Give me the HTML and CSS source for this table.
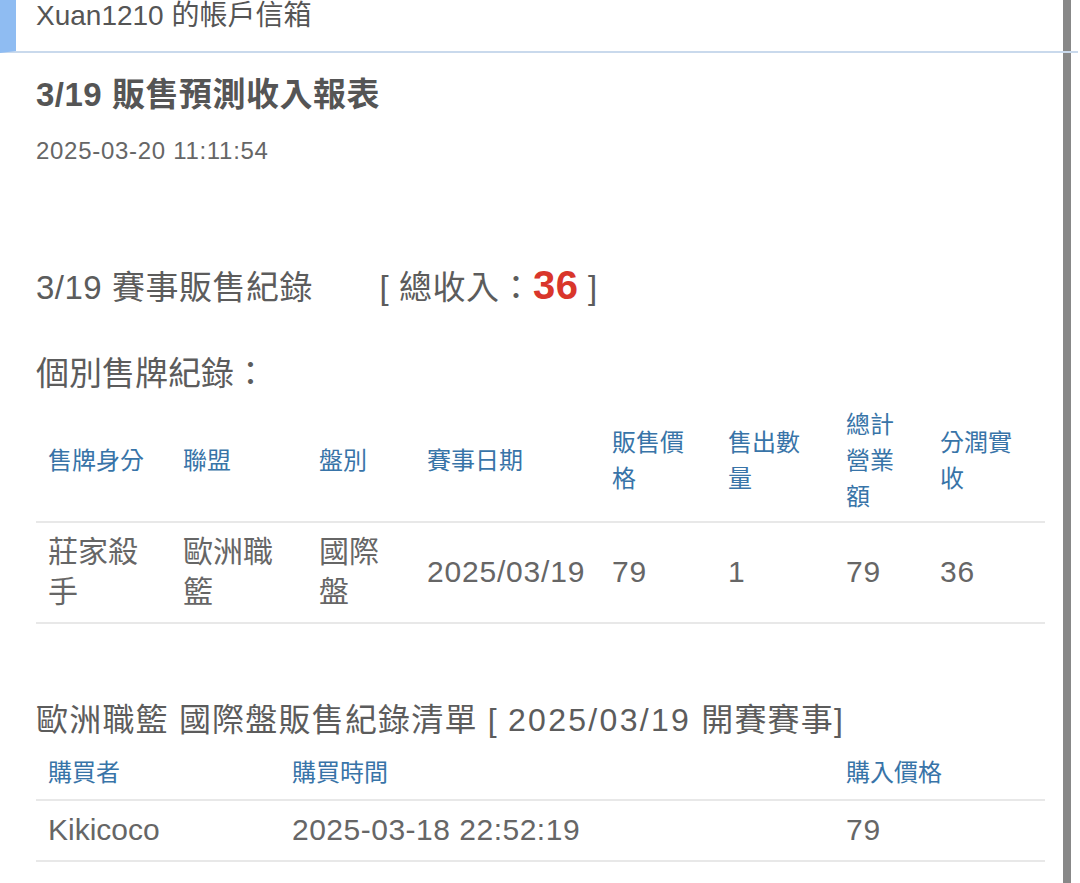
FILE: index.html
```html
<!DOCTYPE html>
<html lang="zh-Hant">
<head>
    <meta charset="UTF-8">
    <meta name="viewport" content="width=device-width, initial-scale=1.0">
    <title>Xuan1210 的帳戶信箱</title>
    <link rel="stylesheet" href="styles.css">
</head>
<body>

<div class="window">
    <!-- Mailbox bar -->
    <div class="mailbox-bar">
        <span class="mailbox-title">Xuan1210 的帳戶信箱</span>
    </div>

    <!-- Message -->
    <div class="message">
        <h1 class="msg-title">3/19 販售預測收入報表</h1>
        <p class="msg-time">2025-03-20 11:11:54</p>

        <h2 class="summary">
            <span class="summary-label">3/19 賽事販售紀錄</span>
            <span class="total">[ 總收入：<b class="total-num">36</b> ]</span>
        </h2>

        <h3 class="sub-title">個別售牌紀錄：</h3>
        <table class="record-table sales-table">
            <colgroup>
                <col style="width: 135px">
                <col style="width: 136px">
                <col style="width: 108px">
                <col style="width: 185px">
                <col style="width: 116px">
                <col style="width: 118px">
                <col style="width: 94px">
                <col style="width: 117px">
            </colgroup>
            <thead>
                <tr>
                    <th>售牌身分</th>
                    <th>聯盟</th>
                    <th>盤別</th>
                    <th>賽事日期</th>
                    <th>販售價格</th>
                    <th>售出數量</th>
                    <th>總計營業額</th>
                    <th>分潤實收</th>
                </tr>
            </thead>
            <tbody>
                <tr>
                    <td>莊家殺手</td>
                    <td>歐洲職籃</td>
                    <td>國際盤</td>
                    <td class="num">2025/03/19</td>
                    <td class="num">79</td>
                    <td class="num">1</td>
                    <td class="num">79</td>
                    <td class="num">36</td>
                </tr>
            </tbody>
        </table>

        <h3 class="list-title">歐洲職籃 國際盤販售紀錄清單 [ <span class="list-date">2025/03/19</span> 開賽賽事]</h3>
        <table class="record-table buyer-table">
            <colgroup>
                <col style="width: 244px">
                <col style="width: 554px">
                <col style="width: 211px">
            </colgroup>
            <thead>
                <tr>
                    <th>購買者</th>
                    <th>購買時間</th>
                    <th>購入價格</th>
                </tr>
            </thead>
            <tbody>
                <tr>
                    <td>Kikicoco</td>
                    <td class="time">2025-03-18 22:52:19</td>
                    <td class="num">79</td>
                </tr>
            </tbody>
        </table>
    </div>
</div>

</body>
</html>
```

FILE: styles.css
```css
/* Global Styles */
body {
    font-family: "Liberation Sans", "Noto Sans CJK TC", sans-serif;
    background-color: #ffffff;
    margin: 0;
    padding: 0;
    color: #666;
}

.window {
    width: 1063px;
    height: 883px;
    border-right: 8px solid #888;
    overflow: visible;
}

/* Mailbox bar */
.mailbox-bar {
    height: 51px;
    margin-right: -15px;
    padding-left: 20px;
    border-left: 16px solid #8fbcf2;
    border-bottom: 2px solid #c9d9ec;
}

.mailbox-title {
    display: block;
    font-size: 28px;
    line-height: 32px;
    color: #555;
}

/* Message */
.message {
    padding: 0 18px 0 36px;
}

.msg-title {
    margin: 22px 0 0;
    font-size: 33px;
    line-height: 40px;
    letter-spacing: 0.5px;
    font-weight: 700;
    color: #555;
}

.msg-time {
    margin: 20px 0 0;
    font-size: 24px;
    line-height: 32px;
    letter-spacing: 0.7px;
    color: #666;
}

.summary {
    margin: 96px 0 0;
    font-size: 33px;
    line-height: 44px;
    letter-spacing: 0.5px;
    font-weight: 400;
    color: #5c5c5c;
}

.total {
    margin-left: 57px;
}

.total-num {
    font-size: 40px;
    font-weight: 700;
    color: #d9362b;
}

.sub-title {
    margin: 42px 0 0;
    font-size: 33px;
    line-height: 44px;
    font-weight: 400;
    color: #5c5c5c;
}

/* Tables */
.record-table {
    width: 1009px;
    table-layout: fixed;
    border-collapse: collapse;
    margin-top: 5px;
}

.record-table th {
    padding: 6px 12px;
    font-size: 24px;
    line-height: 36px;
    font-weight: 400;
    color: #3874a8;
    text-align: left;
    vertical-align: middle;
    border-bottom: 2px solid #e8e8e8;
}

.record-table td {
    padding: 9px 12px 10px;
    font-size: 30px;
    line-height: 40px;
    color: #666;
    vertical-align: middle;
    border-bottom: 2px solid #e8e8e8;
}

.record-table td.num {
    letter-spacing: 0.8px;
}

.record-table td.time {
    letter-spacing: 0.5px;
}

.buyer-table th {
    padding: 8px 12px;
}

.list-title {
    margin: 74px 0 0;
    font-size: 32px;
    line-height: 44px;
    letter-spacing: 1.2px;
    font-weight: 400;
    color: #5c5c5c;
}

.list-date {
    letter-spacing: 2.3px;
}
```
